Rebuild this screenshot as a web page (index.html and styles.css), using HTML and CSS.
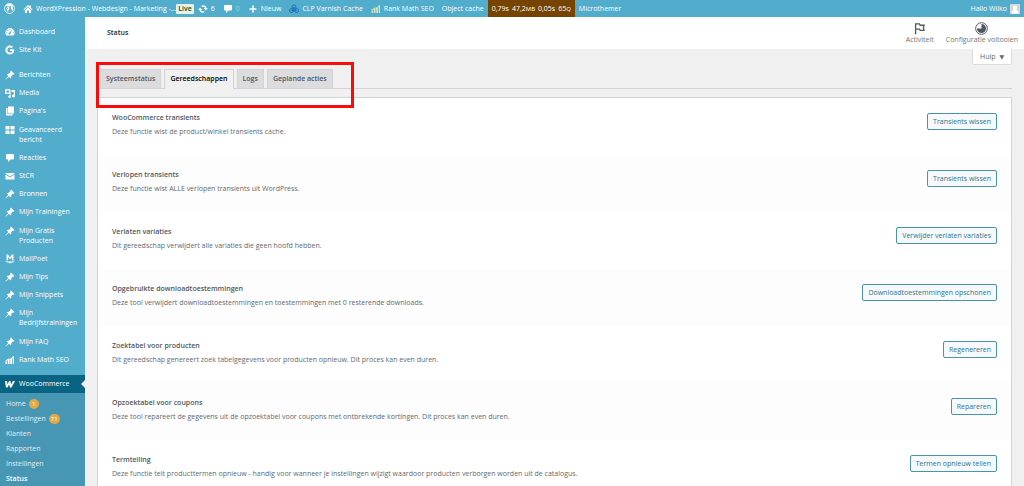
FILE: index.html
```html
<!DOCTYPE html>
<html lang="nl">
<head>
    <meta charset="UTF-8">
    <meta name="viewport" content="width=device-width, initial-scale=1.0">
    <title>Status - WooCommerce</title>
    <link rel="stylesheet" href="styles.css">
</head>
<body>
    <!-- shared menu icons -->
    <svg class="sprite" aria-hidden="true">
        <symbol id="pin" viewBox="0 0 20 20"><path d="M12 1l7 7-2 1.500-1.500-.5-3 3c.5 2 .2 3.500-1 5L8 13.500 1.500 19l-.7-.7L6.500 12 3 8.500c1.500-1.200 3-1.500 5-1l3-3L10.500 3z"/></symbol>
        <symbol id="comment" viewBox="0 0 20 20"><path d="M4 2h12a2 2 0 012 2v7a2 2 0 01-2 2h-5l-5 5v-5H4a2 2 0 01-2-2V4a2 2 0 012-2z"/></symbol>
        <symbol id="chart" viewBox="0 0 20 20"><path d="M1 13h3v5H1zM5.500 10h3.500v8H5.500zM10.500 7H14v11h-3.500zM15.500 3H18v15h-2.500z"/><path d="M0 12l7-5 4 1 6-6 1 1-6 7-4-1-7 4z"/></symbol>
    </svg>

    <header class="adminbar">
        <a href="#" aria-label="WordPress"><svg class="wp" viewBox="0 0 20 20"><circle cx="10" cy="10" r="9" fill="none" stroke="#fff" stroke-width="1.500"/><path d="M3 7l4 10 2.800-7L8.500 7H7.800V6h5v1h-1l3 8.500L16.300 11c.6-2-.8-3-.8-4.500 0-1 .6-1.500 1-1.500a8 8 0 00-13-.5L6.500 6v1H5.800l2.500 7"/></svg></a>
        <a href="#" class="site">
            <svg viewBox="0 0 20 20"><path d="M10 2l3 3V3h3v5l3 3-1.500 1.500L10 5.500l-7.500 7L1 11zM10 7l6 6v5h-4v-5H8v5H4v-5z"/></svg>
            WordXPression - Webdesign - Marketing -…</a>
        <span class="live">Live</span>
        <a href="#" class="updates"><svg viewBox="0 0 20 20"><path d="M8 3c5-1 8.500 1 9 5h2.500L16 13l-4.500-5H14c-.5-2-2.500-3-5-2.500L6.500 5zM12 17c-5 1-8.500-1-9-5H.5L4 7l4.500 5H6c.5 2 2.500 3 5 2.500l2.500.5z"/></svg>6</a>
        <a href="#" class="comments"><svg><use href="#comment"/></svg><span>0</span></a>
        <a href="#" class="new"><svg viewBox="0 0 20 20"><path d="M8.500 3h3v5.500H17v3h-5.500V17h-3v-5.500H3v-3h5.500z"/></svg>Nieuw</a>
        <a href="#" class="varnish"><svg class="outline" viewBox="0 0 20 20" stroke="#1f74bd" stroke-width="2"><circle cx="10" cy="6" r="4"/><circle cx="5" cy="13" r="4"/><circle cx="15" cy="13" r="4"/><path d="M5 13h10L10 6z"/></svg>CLP Varnish Cache</a>
        <a href="#" class="rank"><svg class="bars"><use href="#chart"/></svg>Rank Math SEO</a>
        <a href="#" class="cache">Object cache</a>
        <a href="#" class="monitor"><span>0,79s</span><span>47,2<small>MB</small></span><span>0,05s</span><span>65<small>Q</small></span></a>
        <a href="#" class="micro">Microthemer</a>
        <a href="#" class="account">Hallo Wilko <svg viewBox="0 0 20 20"><path fill="#d5d8dc" d="M0 0h20v20H0z"/><path fill="#fff" d="M10 3c3 0 4.500 2 4 5-.3 2-1 3-2 4 3 .8 5 2 5 7H3c0-5 2-6.200 5-7-1-1-1.700-2-2-4-.5-3 1-5 4-5z"/></svg></a>
    </header>

    <div class="wrap">
        <nav class="sidebar">
            <ul class="menu top">
                <li><a href="#"><svg viewBox="0 0 20 20"><path fill-rule="evenodd" d="M3 17a9 9 0 1114 0zM9 4v2h2V4zM4.500 6v2h2V6zM2.500 10.500v2h2v-2zM15.500 10.500v2h2v-2zM14 5.500L9 11a2 2 0 102 2z"/></svg>Dashboard</a></li>
                <li><a href="#"><svg viewBox="0 0 20 20"><path d="M18.500 8.500H10V12h4.700c-.6 2-2.300 3.200-4.700 3.200a5.200 5.200 0 113.400-9.100L16 3.500A9 9 0 1010 19c5.200 0 9-3.700 8.500-10.500z"/></svg>Site Kit</a></li>
            </ul>
            <ul class="menu posts">
                <li><a href="#"><svg><use href="#pin"/></svg>Berichten</a></li>
                <li><a href="#"><svg viewBox="0 0 20 20"><path fill-rule="evenodd" d="M0 3h2l1-1h5l1 1h2v9H0zM5.500 4.500a2.700 2.700 0 100 5.400 2.700 2.700 0 000-5.400zM13 4h7v12a3 3 0 11-2.500-3V8H13zM9 13h2.500v4a2.500 2.500 0 11-2.500-2z"/></svg>Media</a></li>
                <li><a href="#"><svg viewBox="0 0 20 20"><path d="M6 1h12v14H6zM2 4h3v12h10v3H2z"/></svg>Pagina's</a></li>
                <li><a href="#"><svg viewBox="0 0 20 20"><path d="M1 2h8v7H1zM11 2h8v7h-8zM1 11h8v7H1zM11 11h8v7h-8z"/></svg>Geavanceerd bericht</a></li>
                <li><a href="#"><svg><use href="#comment"/></svg>Reacties</a></li>
                <li><a href="#"><svg viewBox="0 0 20 20"><path d="M1 4h18v1l-9 6-9-6zM1 7l9 6 9-6v10H1z"/></svg>StCR</a></li>
                <li><a href="#"><svg><use href="#pin"/></svg>Bronnen</a></li>
                <li><a href="#"><svg><use href="#pin"/></svg>Mijn Trainingen</a></li>
                <li><a href="#"><svg><use href="#pin"/></svg>Mijn Gratis Producten</a></li>
                <li><a href="#"><svg viewBox="0 0 20 20"><path d="M3 13V1h3l4 6 4-6h3v12h-3V6l-4 5-4-5v7zM0 14c2 1.500 18 1.500 20 0-1 3-6 3-7 3l-3 2-3-2c-1 0-6 0-7-3z"/></svg>MailPoet</a></li>
                <li><a href="#"><svg><use href="#pin"/></svg>Mijn Tips</a></li>
                <li><a href="#"><svg><use href="#pin"/></svg>Mijn Snippets</a></li>
                <li><a href="#"><svg><use href="#pin"/></svg>Mijn Bedrijfstrainingen</a></li>
                <li><a href="#"><svg><use href="#pin"/></svg>Mijn FAQ</a></li>
                <li><a href="#"><svg><use href="#chart"/></svg>Rank Math SEO</a></li>
            </ul>
            <a href="#" class="current"><svg viewBox="0 0 20 20"><path d="M0 4h4l1 7 3-7h3l1 7 4-7h4l-7 13h-3l-2-6-3 6H2z"/></svg>WooCommerce</a>
            <ul class="submenu">
                <li><a href="#">Home <span class="badge">1</span></a></li>
                <li><a href="#">Bestellingen <span class="badge">71</span></a></li>
                <li><a href="#">Klanten</a></li>
                <li><a href="#">Rapporten</a></li>
                <li><a href="#">Instellingen</a></li>
                <li><a href="#" class="active">Status</a></li>
            </ul>
        </nav>

        <main>
            <div class="page-header">
                <h1>Status</h1>
                <button class="panel-tab"><svg class="outline" viewBox="0 0 20 20" stroke="#50575e" stroke-width="2"><path d="M4 19V3h6l1 2h6l-1 4 1 4h-6l-1-2H4"/></svg>Activiteit</button>
                <button class="panel-tab"><svg viewBox="0 0 20 20"><circle cx="10" cy="10" r="9" fill="none" stroke="#50575e" stroke-width="1.500"/><path fill="#50575e" d="M10 3a7 7 0 11-7 7h7z"/></svg>Configuratie voltooien</button>
            </div>
            <div class="content">
                <div class="help-row"><button class="help">Hulp <span>▼</span></button></div>
                <nav class="tabs">
                    <a href="#">Systeemstatus</a>
                    <a href="#" class="active">Gereedschappen</a>
                    <a href="#">Logs</a>
                    <a href="#">Geplande acties</a>
                    <div class="marker"></div>
                </nav>
                <table class="tools">
                    <tr>
                        <th scope="row">WooCommerce transients<p>Deze functie wist de product/winkel transients cache.</p></th>
                        <td><button>Transients wissen</button></td>
                    </tr>
                    <tr>
                        <th scope="row">Verlopen transients<p>Deze functie wist ALLE verlopen transients uit WordPress.</p></th>
                        <td><button>Transients wissen</button></td>
                    </tr>
                    <tr>
                        <th scope="row">Verlaten variaties<p>Dit gereedschap verwijdert alle variaties die geen hoofd hebben.</p></th>
                        <td><button>Verwijder verlaten variaties</button></td>
                    </tr>
                    <tr>
                        <th scope="row">Opgebruikte downloadtoestemmingen<p>Deze tool verwijdert downloadtoestemmingen en toestemmingen met 0 resterende downloads.</p></th>
                        <td><button>Downloadtoestemmingen opschonen</button></td>
                    </tr>
                    <tr>
                        <th scope="row">Zoektabel voor producten<p>Dit gereedschap genereert zoek tabelgegevens voor producten opnieuw. Dit proces kan even duren.</p></th>
                        <td><button>Regenereren</button></td>
                    </tr>
                    <tr>
                        <th scope="row">Opzoektabel voor coupons<p>Deze tool repareert de gegevens uit de opzoektabel voor coupons met ontbrekende kortingen. Dit proces kan even duren.</p></th>
                        <td><button>Repareren</button></td>
                    </tr>
                    <tr>
                        <th scope="row">Termtelling<p>Deze functie telt producttermen opnieuw - handig voor wanneer je instellingen wijzigt waardoor producten verborgen worden uit de catalogus.</p></th>
                        <td><button>Termen opnieuw tellen</button></td>
                    </tr>
                </table>
            </div>
        </main>
    </div>
</body>
</html>
```
FILE: styles.css
```css
* {
    box-sizing: border-box;
}
body {
    margin: 0;
    height: 100vh;
    display: flex;
    flex-direction: column;
    overflow: hidden;
    background: #f0f0f0;
    color: #50575e;
    font-family: "Open Sans", "Noto Sans", sans-serif;
    font-size: 7px;
    line-height: 10px;
}
a {
    color: inherit;
    text-decoration: none;
}
button {
    font: inherit;
    cursor: pointer;
}
svg {
    width: 10px;
    height: 10px;
    flex: none;
    fill: currentColor;
}
.outline {
    fill: none;
}
.sprite {
    position: absolute;
    width: 0;
    height: 0;
}

/* admin bar */
.adminbar {
    display: flex;
    align-items: center;
    flex: none;
    height: 17px;
    padding: 0 4px;
    background: #52accc;
    color: #fff;
    white-space: nowrap;
}
.adminbar a {
    display: flex;
    align-items: center;
    gap: 3px;
}
.adminbar .wp {
    width: 11px;
    height: 11px;
}
.adminbar .site {
    margin-left: 8px;
}
.live {
    padding: 0 2px;
    border-radius: 1px;
    background: #e6f2e4;
    color: #2a4a26;
    font-weight: 600;
}
.adminbar .updates {
    margin-left: 4px;
}
.adminbar .comments,
.adminbar .new,
.adminbar .varnish,
.adminbar .rank,
.adminbar .cache {
    margin-left: 8px;
}
.comments span {
    opacity: 0.4;
}
.bars {
    color: #d5e3bd;
}
.adminbar .monitor {
    height: 17px;
    margin-left: 4px;
    padding: 0 4px;
    background: #740;
}
.monitor small {
    font-size: 6px;
}
.adminbar .micro {
    margin-left: 4px;
}
.adminbar .account {
    margin-left: auto;
}

.wrap {
    display: flex;
    flex: 1;
    min-height: 0;
}

/* left menu */
.sidebar {
    display: flex;
    flex-direction: column;
    flex: none;
    width: 85px;
    padding-top: 6px;
    background: #52accc;
    color: #fff;
}
.sidebar ul {
    margin: 0;
    padding: 0;
    list-style: none;
}
.menu a,
.current {
    display: flex;
    gap: 4px;
    padding: 4px 4px 4px 5px;
}
.posts {
    display: flex;
    flex-direction: column;
    justify-content: space-between;
    flex: 1;
}
.sidebar .posts {
    margin: 7px 0 6px;
}
.current {
    position: relative;
    background: #096484;
}
.current::after {
    content: "";
    position: absolute;
    right: 0;
    top: 5px;
    border: 4px solid transparent;
    border-right-color: #f0f0f0;
    border-left: 0;
}
.sidebar .submenu {
    padding-top: 3px;
    background: #4796b3;
    color: #e2ecf1;
}
.submenu a {
    display: flex;
    align-items: center;
    gap: 3px;
    height: 15px;
    padding-left: 6px;
}
.submenu .active {
    color: #fff;
    font-weight: 600;
}
.badge {
    min-width: 10px;
    padding: 0 2px;
    border-radius: 5px;
    background: #e1a948;
    color: #fff;
    font-size: 6px;
    text-align: center;
}

/* page */
main {
    flex: 1;
    min-width: 0;
}
.page-header {
    display: flex;
    align-items: center;
    gap: 12px;
    height: 32px;
    padding: 0 6px 0 22px;
    background: #fff;
}
.page-header h1 {
    flex: 1;
    margin: 0;
    color: #1e1e1e;
    font-size: 7px;
    font-weight: 600;
}
.panel-tab {
    display: flex;
    flex-direction: column;
    align-items: center;
    padding: 0;
    border: 0;
    background: none;
    color: #757575;
}
.panel-tab svg {
    width: 13px;
    height: 13px;
}
.content {
    padding: 0 12px;
}
.help-row {
    display: flex;
    justify-content: flex-end;
}
.help {
    height: 16px;
    padding: 0 7px;
    border: 1px solid #dcdcde;
    border-top: 0;
    border-radius: 0 0 2px 2px;
    background: #fff;
    color: #646970;
}
.help span {
    margin-left: 2px;
    font-family: "DejaVu Sans", sans-serif;
    font-size: 6px;
}
.tabs {
    position: relative;
    display: flex;
    gap: 3px;
    margin-top: 4px;
    padding-left: 3px;
    border-bottom: 1px solid #d3d3d6;
    font-weight: 600;
}
.tabs a {
    padding: 4px 5px;
    border: 1px solid #d3d3d6;
    border-bottom: 0;
    background: #dcdcde;
}
.tabs .active {
    margin-bottom: -1px;
    background: #f0f0f0;
    color: #000;
}
.marker {
    position: absolute;
    left: -1px;
    top: -7px;
    width: 258px;
    height: 46px;
    border: 3px solid #f80b0b;
    pointer-events: none;
}
.tools {
    width: 100%;
    margin-top: 8px;
    border: 1px solid #d3d3d6;
    border-spacing: 0;
    background: #fff;
}
.tools tr {
    height: 57px;
}
.tools tr:nth-child(even) {
    background: #fdfdfd;
}
.tools th,
.tools td {
    padding: 15px 14px 10px;
    vertical-align: top;
}
.tools th {
    text-align: left;
    font-weight: 600;
}
.tools p {
    margin: 4px 0 0;
    font-weight: 400;
    color: #646970;
}
.tools td {
    text-align: right;
}
.tools button {
    height: 17px;
    padding: 0 5px;
    border: 1px solid #4a93a8;
    border-radius: 2px;
    background: #f6f9fa;
    color: #32758c;
    white-space: nowrap;
}
```
